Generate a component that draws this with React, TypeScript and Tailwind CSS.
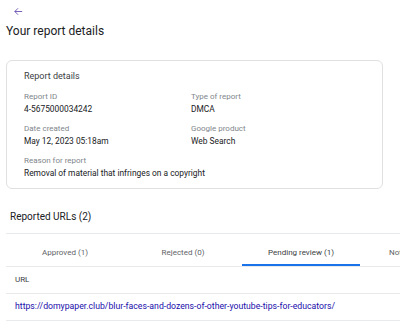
export default function App() {
  const tabs = [
    { label: 'Approved (1)', active: false },
    { label: 'Rejected (0)', active: false },
    { label: 'Pending review (1)', active: true },
    { label: 'Not approved (0)', active: false },
  ]

  return (
    <div className="h-[330px] w-[400px] overflow-hidden bg-white text-[#202124]" style={{ fontFamily: 'Roboto, "Liberation Sans", sans-serif' }}>
      <div className="px-[6px] pt-[5px]">
        <button className="flex h-[12px] w-[20px] items-center justify-center pl-[4px] text-[#5b3fa6]">
          <svg width="11" height="11" viewBox="0 0 24 24" fill="none" stroke="currentColor" strokeWidth="1.8">
            <path d="M20 12H4M11 5l-7 7 7 7" />
          </svg>
        </button>
        <h1 className="mt-[6px] text-[12px] leading-[16px]">Your report details</h1>
      </div>

      <section className="ml-[6px] mt-[21px] w-[377px] rounded-[6px] border border-[#e0e0e0] px-[17px] pb-[10px] pt-[9px]">
        <p className="text-[9px] leading-[12px] text-[#3c4043]">Report details</p>
        <div className="mt-[10px] grid grid-cols-[167px_1fr] gap-y-[10px]">
          <Field label="Report ID" value="4-5675000034242" />
          <Field label="Type of report" value="DMCA" />
          <Field label="Date created" value="May 12, 2023 05:18am" />
          <Field label="Google product" value="Web Search" />
          <div className="col-span-2">
            <Field label="Reason for report" value="Removal of material that infringes on a copyright" />
          </div>
        </div>
      </section>

      <h2 className="ml-[10px] mt-[21px] text-[10px] leading-[14px]">Reported URLs (2)</h2>

      <div className="ml-[6px] mt-[9px] border-t border-[#e8eaed]">
        <div className="flex border-b border-[#e8eaed]">
          {tabs.map((tab) => (
            <div key={tab.label} className={`relative flex h-[32px] w-[118px] shrink-0 justify-center whitespace-nowrap pt-[14px] text-[8px] leading-[10px] ${tab.active ? 'text-[#3c4043]' : 'text-[#5f6368]'}`}>
              {tab.label}
              {tab.active && <span className="absolute bottom-0 left-0 h-[2px] w-full bg-[#1a73e8]" />}
            </div>
          ))}
        </div>
        <div className="flex h-[27px] items-center border-b border-[#e8eaed] pl-[9px] text-[8px] text-[#3c4043]">URL</div>
        <div className="flex h-[27px] items-center whitespace-nowrap border-b border-[#e8eaed] pl-[9px] text-[8.7px] text-[#1a0dab]">
          https://domypaper.club/blur-faces-and-dozens-of-other-youtube-tips-for-educators/
        </div>
      </div>
    </div>
  )
}

function Field({ label, value }: { label: string; value: string }) {
  return (
    <div>
      <p className="text-[8px] leading-[10px] text-[#80868b]">{label}</p>
      <p className="mt-[2px] text-[8.4px] leading-[10px] text-[#202124]">{value}</p>
    </div>
  )
}
